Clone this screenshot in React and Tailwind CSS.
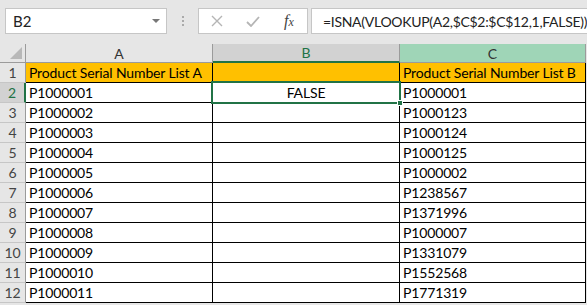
import React from "react";

const listA = ["P1000001","P1000002","P1000003","P1000004","P1000005","P1000006","P1000007","P1000008","P1000009","P1000010","P1000011"];
const listC = ["P1000001","P1000123","P1000124","P1000125","P1000002","P1238567","P1371996","P1000007","P1331079","P1552568","P1771319"];

const cellFont = { fontFamily: "Lato, 'Noto Sans', sans-serif" };
const uiFont = { fontFamily: "Lato, 'Liberation Sans', sans-serif" };

export default function App() {
  const rows = [];
  for (let i = 0; i < 12; i++) {
    const r = i + 1;
    const sel = r === 2;
    rows.push(
      <React.Fragment key={r}>
        <div className={`h-[20px] flex items-center justify-center text-[14px] border-b ${sel ? "bg-[#d2d2d2] text-[#217346] border-r-2 border-r-[#217346] border-b-[#c6c6c6]" : "bg-[#e6e6e6] text-[#444] border-r border-r-[#9b9b9b] border-b-[#c6c6c6]"}`} style={uiFont}>{r}</div>
        <div className={`h-[20px] border-b border-r border-black flex items-center pl-[3px] text-[14px] tracking-[-0.15px] whitespace-nowrap overflow-hidden text-black ${r === 1 ? "bg-[#ffc000]" : "bg-white"}`} style={cellFont}>
          {r === 1 ? "Product Serial Number List A" : listA[i - 1]}
        </div>
        <div className={`h-[20px] border-b border-r border-black flex items-center justify-center text-[14px] tracking-[-0.15px] whitespace-nowrap text-black ${r === 1 ? "bg-[#ffc000]" : "bg-white"}`} style={cellFont}>
          {r === 2 ? "FALSE" : ""}
        </div>
        <div className={`h-[20px] border-b border-r border-black flex items-center pl-[3px] text-[14px] tracking-[-0.15px] whitespace-nowrap overflow-hidden text-black ${r === 1 ? "bg-[#ffc000]" : "bg-white"}`} style={cellFont}>
          {r === 1 ? "Product Serial Number List B" : listC[i - 1]}
        </div>
      </React.Fragment>
    );
  }

  return (
    <div className="w-[587px] h-[305px] bg-[#e6e6e6] overflow-hidden relative">
      {/* formula bar */}
      <div className="h-[44px] flex items-start pt-[8px] pl-[5px]">
        <div className="shrink-0 w-[162px] h-[26px] bg-white border border-[#c6c6c6] flex items-center justify-between pl-[7px] pr-[6px]">
          <span className="text-[15px] text-[#222]" style={uiFont}>B2</span>
          <svg width="8" height="5" viewBox="0 0 8 5"><path d="M0 0 L8 0 L4 4 Z" fill="#777" /></svg>
        </div>
        <div className="shrink-0 w-[31px] h-[26px] flex flex-col items-center justify-center gap-[2px]">
          <div className="w-[2px] h-[2px] bg-[#aaa]" />
          <div className="w-[2px] h-[2px] bg-[#aaa]" />
          <div className="w-[2px] h-[2px] bg-[#aaa]" />
        </div>
        <div className="shrink-0 w-[110px] h-[26px] bg-white border border-[#c6c6c6] flex items-center">
          <div className="w-[36px] flex justify-center">
            <svg width="12" height="12" viewBox="0 0 12 12"><path d="M1 1 L11 11 M11 1 L1 11" stroke="#b5b5b5" strokeWidth="1.4" fill="none" /></svg>
          </div>
          <div className="w-[36px] flex justify-center">
            <svg width="14" height="11" viewBox="0 0 14 11"><path d="M1 6 L5 10 L13 1" stroke="#b5b5b5" strokeWidth="1.8" fill="none" /></svg>
          </div>
          <div className="w-[36px] flex justify-center">
            <span className="text-[16px] italic text-[#444]" style={{ fontFamily: "'Liberation Serif', serif" }}>f<span className="text-[12px]">x</span></span>
          </div>
        </div>
        <div className="ml-[3px] flex-1 min-w-0 h-[26px] bg-white border border-[#c6c6c6] border-r-0 flex items-center pl-[11px] overflow-hidden">
          <span className="text-[14px] tracking-[-0.3px] text-[#222] whitespace-nowrap" style={uiFont}>=ISNA(VLOOKUP(A2,$C$2:$C$12,1,FALSE))</span>
        </div>
      </div>

      {/* grid */}
      <div className="grid grid-cols-[26px_187px_187px_186px]">
        {/* header row */}
        <div className="h-[19px] bg-[#e6e6e6] border-r border-b border-[#9b9b9b] relative overflow-hidden">
          <svg className="absolute right-[3px] bottom-[3px]" width="12" height="12" viewBox="0 0 12 12"><path d="M12 0 L12 12 L0 12 Z" fill="#b8b8b8" /></svg>
        </div>
        <div className="h-[19px] bg-[#e6e6e6] border-r border-b border-[#9b9b9b] flex items-center justify-center text-[14px] text-[#333]" style={uiFont}>A</div>
        <div className="h-[19px] bg-[#d2d2d2] border-r border-[#9b9b9b] border-b-2 border-b-[#217346] flex items-center justify-center text-[14px] text-[#217346]" style={uiFont}>B</div>
        <div className="h-[19px] bg-[#9fd5b7] border-r border-b border-[#9b9b9b] flex items-center justify-center text-[14px] text-[#333]" style={uiFont}>C</div>
        {rows}
      </div>

      {/* selection overlay */}
      <div className="absolute left-[211px] top-[81px] w-[190px] h-[23px] border-2 border-[#217346]" />
      <div className="absolute left-[397px] top-[100px] w-[6px] h-[6px] bg-[#217346] border border-white" />
    </div>
  );
}
